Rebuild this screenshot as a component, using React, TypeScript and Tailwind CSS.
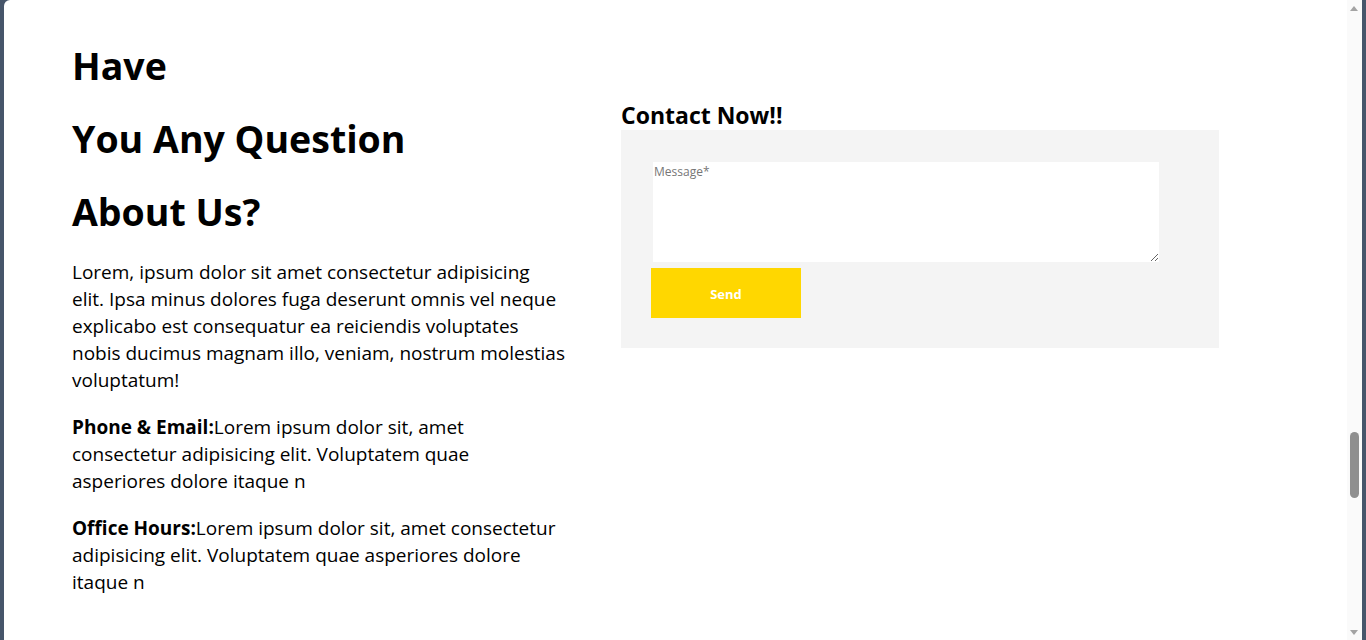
import React from 'react';

const font = { fontFamily: '"Segoe UI", "Open Sans", sans-serif' };

const Scrollbar: React.FC = () => (
  <div className="w-[15px] bg-[#fafafa] relative flex-shrink-0">
    <div className="absolute left-[3px] top-[6px] w-0 h-0 border-l-[4px] border-r-[4px] border-b-[5px] border-l-transparent border-r-transparent border-b-[#a3a3a3]"></div>
    <div className="absolute left-[3px] top-[432px] w-[9px] h-[66px] rounded-full bg-[#8f8f8f]"></div>
    <div className="absolute left-[3px] bottom-[5px] w-0 h-0 border-l-[4px] border-r-[4px] border-t-[5px] border-l-transparent border-r-transparent border-t-[#a3a3a3]"></div>
  </div>
);

export default function App() {
  return (
    <div className="w-[1366px] h-[640px] bg-[#46556a] px-[4px] overflow-hidden" style={font}>
      <div className="h-full bg-white rounded-tl-[6px] flex">
        <div className="flex-1 flex pl-[68px] pt-[29px] text-black">
          {/* Left: intro */}
          <div className="w-[510px]">
            <h1 className="text-[37.5px] font-bold leading-[73px]">
              Have
              <br />
              You Any Question
              <br />
              About Us?
            </h1>
            <div className="mt-[11px] space-y-[20px] text-[19px] leading-[27px]">
              <p>
                Lorem, ipsum dolor sit amet consectetur adipisicing
                <br />
                elit. Ipsa minus dolores fuga deserunt omnis vel neque
                <br />
                explicabo est consequatur ea reiciendis voluptates
                <br />
                nobis ducimus magnam illo, veniam, nostrum molestias
                <br />
                voluptatum!
              </p>
              <p>
                <strong>Phone &amp; Email:</strong>Lorem ipsum dolor sit, amet
                <br />
                consectetur adipisicing elit. Voluptatem quae
                <br />
                asperiores dolore itaque n
              </p>
              <p>
                <strong>Office Hours:</strong>Lorem ipsum dolor sit, amet consectetur
                <br />
                adipisicing elit. Voluptatem quae asperiores dolore
                <br />
                itaque n
              </p>
            </div>
          </div>

          {/* Right: contact form */}
          <div className="ml-[39px] w-[598px] pt-[69px]">
            <h2 className="text-[23px] font-bold leading-[32px] translate-y-[1px]">Contact Now!!</h2>
            <form className="bg-[#f4f4f4] pt-[32px] pb-[30px] pl-[30px] flex flex-col items-start gap-[6px]">
              <textarea
                placeholder="Message*"
                className="ml-[2px] w-[506px] h-[100px] bg-white px-[1px] py-[1px] text-[12px] placeholder:text-[#767676] outline-none"
                style={font}
              ></textarea>
              <button
                type="button"
                className="w-[150px] h-[50px] pt-[4px] bg-[#ffd700] text-white text-[13px] font-bold"
              >
                Send
              </button>
            </form>
          </div>
        </div>
        <Scrollbar />
      </div>
    </div>
  );
}
